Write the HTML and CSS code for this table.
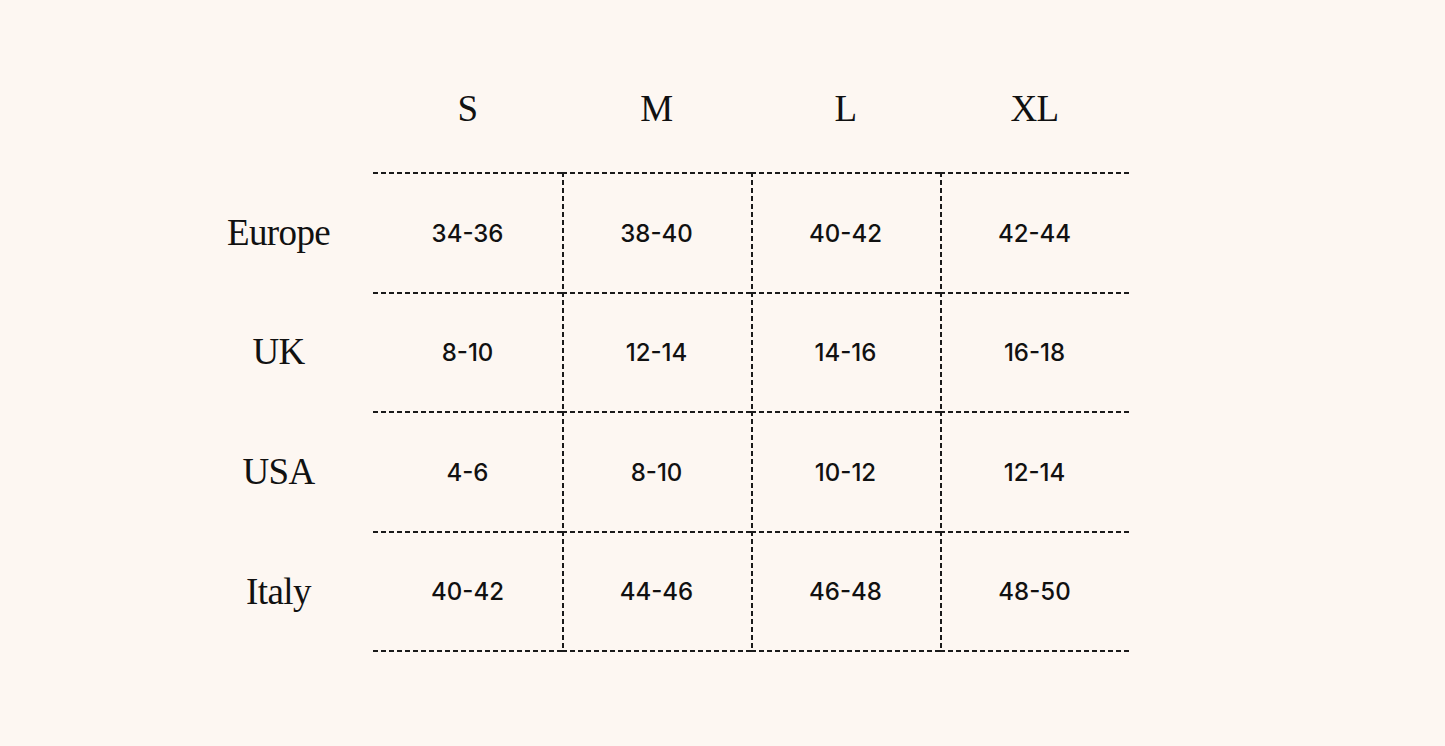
FILE: index.html
```html
<!DOCTYPE html>
<html lang="en">
<head>
<meta charset="utf-8">
<title>Size chart</title>
<link rel="stylesheet" href="styles.css">
</head>
<body>
<main class="page">
  <div class="chart">
    <div class="head"></div>
    <div class="head">S</div>
    <div class="head">M</div>
    <div class="head">L</div>
    <div class="head">XL</div>

    <div class="label">Europe</div>
    <div class="cell first">34-36</div>
    <div class="cell">38-40</div>
    <div class="cell">40-42</div>
    <div class="cell">42-44</div>

    <div class="label">UK</div>
    <div class="cell first">8-10</div>
    <div class="cell">12-14</div>
    <div class="cell">14-16</div>
    <div class="cell">16-18</div>

    <div class="label">USA</div>
    <div class="cell first">4-6</div>
    <div class="cell">8-10</div>
    <div class="cell">10-12</div>
    <div class="cell">12-14</div>

    <div class="label">Italy</div>
    <div class="cell first last">40-42</div>
    <div class="cell last">44-46</div>
    <div class="cell last">46-48</div>
    <div class="cell last">48-50</div>
  </div>
</main>
</body>
</html>
```

FILE: styles.css
```css
html, body {
  margin: 0;
  padding: 0;
  background: #fdf7f2;
  color: #111;
}

.page {
  width: 1445px;
  height: 746px;
  padding-left: 184px;
  box-sizing: border-box;
}

.chart {
  display: grid;
  grid-template-columns: repeat(5, 189px);
  grid-template-rows: 172px 120px 119px 120px 121px;
}

.head,
.label {
  display: flex;
  align-items: center;
  justify-content: center;
  font-family: "Liberation Serif", "Times New Roman", serif;
  font-size: 37px;
  font-weight: 400;
  letter-spacing: -0.6px;
}

.head {
  align-items: flex-end;
  padding-bottom: 42px;
  box-sizing: border-box;
}

.cell {
  display: flex;
  align-items: center;
  justify-content: center;
  font-family: Inter, "Liberation Sans", sans-serif;
  font-size: 24px;
  font-weight: 500;
  letter-spacing: 0;
  padding-top: 2px;
  box-sizing: border-box;
  background-image:
    repeating-linear-gradient(90deg, #1a1a1a 0 5px, transparent 5px 8px),
    repeating-linear-gradient(180deg, #1a1a1a 0 5px, transparent 5px 8px);
  background-size: 100% 2px, 2px 100%;
  background-position: left top, left top;
  background-repeat: no-repeat;
}

.cell.first {
  background-image:
    repeating-linear-gradient(90deg, #1a1a1a 0 5px, transparent 5px 8px);
  background-size: 100% 2px;
}

.cell.last {
  padding-top: 0;
  background-image:
    repeating-linear-gradient(90deg, #1a1a1a 0 5px, transparent 5px 8px),
    repeating-linear-gradient(90deg, #1a1a1a 0 5px, transparent 5px 8px),
    repeating-linear-gradient(180deg, #1a1a1a 0 5px, transparent 5px 8px);
  background-size: 100% 2px, 100% 2px, 2px 100%;
  background-position: left top, left bottom, left top;
}

.cell.first.last {
  background-image:
    repeating-linear-gradient(90deg, #1a1a1a 0 5px, transparent 5px 8px),
    repeating-linear-gradient(90deg, #1a1a1a 0 5px, transparent 5px 8px);
  background-size: 100% 2px, 100% 2px;
  background-position: left top, left bottom;
}
```
